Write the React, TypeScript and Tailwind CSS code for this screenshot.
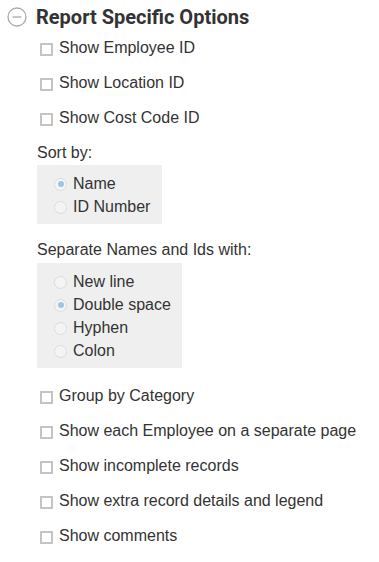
import React from "react";

function CheckRow({ label }: { label: string }) {
  return (
    <div className="flex h-[35px] items-center">
      <span className="ml-[3px] mt-[3px] block h-[13px] w-[13px] border-2 border-[#c4c4c4] bg-white"></span>
      <span className="ml-[6px]">{label}</span>
    </div>
  );
}

function RadioRow({ label, checked }: { label: string; checked?: boolean }) {
  return (
    <div className="flex h-[23px] items-center">
      <span className="ml-[17px] mt-[1px] flex h-[13px] w-[13px] items-center justify-center rounded-full border border-[#dcdcdc] bg-[#f4f4f4]">
        {checked && <span className="block h-[6px] w-[6px] rounded-full bg-[#9ec4e6]"></span>}
      </span>
      <span className="ml-[6px]">{label}</span>
    </div>
  );
}

export default function App() {
  const topOptions = ["Show Employee ID", "Show Location ID", "Show Cost Code ID"];
  const bottomOptions = [
    "Group by Category",
    "Show each Employee on a separate page",
    "Show incomplete records",
    "Show extra record details and legend",
    "Show comments",
  ];

  return (
    <div className="min-h-[562px] bg-white pt-[4px] font-['Liberation_Sans',Arial,sans-serif] text-[16px] text-[#333]">
      <div className="flex h-[26px] items-center pl-[7px]">
        <svg width="20" height="20" viewBox="0 0 20 20" fill="none">
          <circle cx="10" cy="10" r="9" stroke="#aaaaaa" strokeWidth="1.3" />
          <path d="M5.5 10h9" stroke="#aaaaaa" strokeWidth="1.3" />
        </svg>
        <h2 className="ml-[9px] font-['Roboto',sans-serif] text-[20px] font-bold text-[#333]">Report Specific Options</h2>
      </div>

      <div className="ml-[37px]">
        {topOptions.map((o) => (
          <CheckRow key={o} label={o} />
        ))}

        <div className="mt-[6px] h-[24px] leading-[24px]">Sort by:</div>
        <div className="w-[125px] bg-[#efefef] pb-[6px] pt-[7px]">
          <RadioRow label="Name" checked />
          <RadioRow label="ID Number" />
        </div>

        <div className="mt-[14px] mb-[1px] h-[24px] leading-[24px]">Separate Names and Ids with:</div>
        <div className="w-[145px] bg-[#efefef] pb-[6px] pt-[7px]">
          <RadioRow label="New line" />
          <RadioRow label="Double space" checked />
          <RadioRow label="Hyphen" />
          <RadioRow label="Colon" />
        </div>

        <div className="mt-[10px]">
          {bottomOptions.map((o) => (
            <CheckRow key={o} label={o} />
          ))}
        </div>
      </div>
    </div>
  );
}
